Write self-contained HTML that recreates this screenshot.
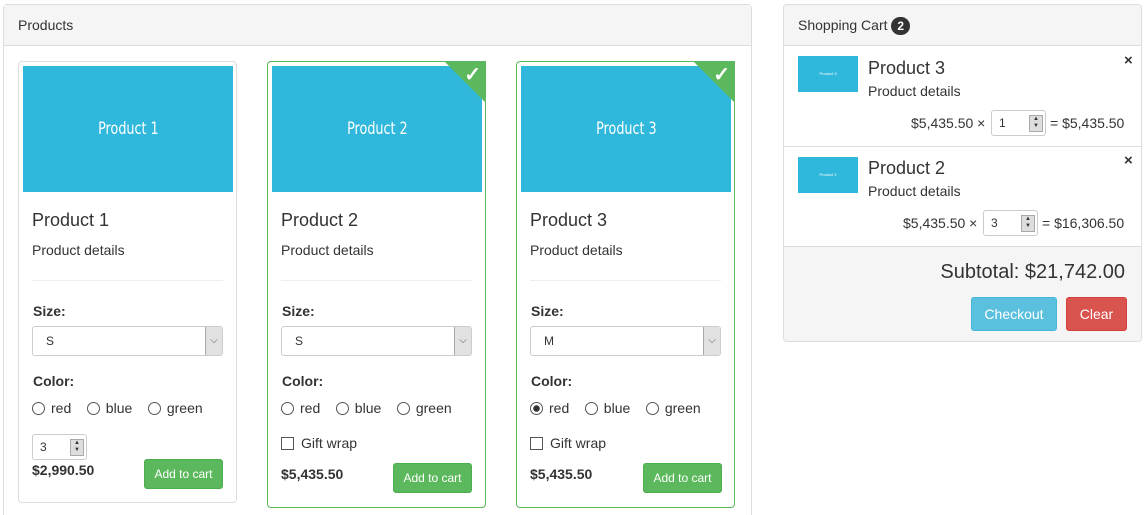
<!DOCTYPE html>
<html><head><style>
*{box-sizing:border-box}
html,body{margin:0;width:1145px;height:515px;overflow:hidden}
body{background:#fff;font-family:"Liberation Sans",Arial,sans-serif;color:#333;font-size:14px;position:relative}
.a{position:absolute}
.panel{border:1px solid #ddd;border-radius:4px;background:#fff}
.ph{background:#f5f5f5;border-bottom:1px solid #ddd;height:41px;padding:12px 14px;font-size:14px}
.card{border:1px solid #ddd;border-radius:4px;width:219px}
.card.sel{border-color:#5cb85c}
.img{left:4px;top:4px;width:210px;height:126px;background:#2fb8db;color:#fff;font-size:17px;display:flex;align-items:center;justify-content:center}
.img span{display:inline-block;transform:scaleX(0.75);font-family:"DejaVu Sans",sans-serif}
.tri{right:-1px;top:-1px;width:0;height:0;border-top:42px solid #5cb85c;border-left:42px solid transparent}
.chk{right:4px;top:0px;color:#fff;font-size:20px;font-weight:bold}
.sel2{width:191px;height:30px;border:1px solid #ccc;border-radius:3px;font-size:12px;padding:7px 13px}
.sel2 .dd{position:absolute;right:0;top:0;width:17px;height:28px;background:#e1e1e1;border-left:1px solid #aaa;font-size:10px;text-align:center;line-height:28px;color:#555}
.rad{width:13px;height:13px;border:1px solid #555;border-radius:50%;display:inline-block;vertical-align:-2px;margin-right:6px}
.btn{background:#5cb85c;color:#fff;border:1px solid #4cae4c;border-radius:3px;font-size:12px;text-align:center;width:79px;height:30px;line-height:28px}
.num{border:1px solid #ccc;border-radius:3px;height:26px;font-size:12px;padding:5px 7px}
.sp{position:absolute;right:2px;top:4px;width:14px;height:17px;background:#ddd;border:1px solid #aaa;font-size:6px;line-height:7px;text-align:center}
</style></head><body>
<div class="a panel" style="left:3px;top:4px;width:749px;height:540px">
<div class="ph">Products</div></div>

<!-- card1 -->
<div class="a card" style="left:18px;top:61px;height:442px">
<div class="a img"><span>Product 1</span></div>
<div class="a" style="left:13px;top:148px;font-size:18px">Product 1</div>
<div class="a" style="left:13px;top:180px">Product details</div>
<div class="a" style="left:13px;top:218px;width:191px;border-top:1px solid #eee"></div>
<div class="a" style="left:14px;top:241px;font-weight:bold">Size:</div>
<div class="a sel2" style="left:13px;top:264px">S<div class="dd">⌵</div></div>
<div class="a" style="left:14px;top:311px;font-weight:bold">Color:</div>
<div class="a" style="left:13px;top:338px"><span class="rad"></span>red&nbsp;&nbsp;&nbsp; <span class="rad"></span>blue&nbsp;&nbsp;&nbsp; <span class="rad"></span>green</div>
<div class="a num" style="left:13px;top:372px;width:55px">3<div class="sp">▲<br>▼</div></div>
<div class="a" style="left:13px;top:400px;font-weight:bold">$2,990.50</div>
<div class="a btn" style="left:125px;top:397px">Add to cart</div>
</div>

<!-- card2 -->
<div class="a card sel" style="left:267px;top:61px;height:447px">
<div class="a img"><span>Product 2</span></div>
<div class="a tri"></div><div class="a chk">✓</div>
<div class="a" style="left:13px;top:148px;font-size:18px">Product 2</div>
<div class="a" style="left:13px;top:180px">Product details</div>
<div class="a" style="left:13px;top:218px;width:191px;border-top:1px solid #eee"></div>
<div class="a" style="left:14px;top:241px;font-weight:bold">Size:</div>
<div class="a sel2" style="left:13px;top:264px">S<div class="dd">⌵</div></div>
<div class="a" style="left:14px;top:311px;font-weight:bold">Color:</div>
<div class="a" style="left:13px;top:338px"><span class="rad"></span>red&nbsp;&nbsp;&nbsp; <span class="rad"></span>blue&nbsp;&nbsp;&nbsp; <span class="rad"></span>green</div>
<div class="a" style="left:13px;top:373px"><span class="rad" style="border-radius:0;margin-right:7px"></span>Gift wrap</div>
<div class="a" style="left:13px;top:404px;font-weight:bold">$5,435.50</div>
<div class="a btn" style="left:125px;top:401px">Add to cart</div>
</div>

<!-- card3 -->
<div class="a card sel" style="left:516px;top:61px;height:447px">
<div class="a img"><span>Product 3</span></div>
<div class="a tri"></div><div class="a chk">✓</div>
<div class="a" style="left:13px;top:148px;font-size:18px">Product 3</div>
<div class="a" style="left:13px;top:180px">Product details</div>
<div class="a" style="left:13px;top:218px;width:191px;border-top:1px solid #eee"></div>
<div class="a" style="left:14px;top:241px;font-weight:bold">Size:</div>
<div class="a sel2" style="left:13px;top:264px">M<div class="dd">⌵</div></div>
<div class="a" style="left:14px;top:311px;font-weight:bold">Color:</div>
<div class="a" style="left:13px;top:338px"><span class="rad" style="background:radial-gradient(circle,#333 3px,#fff 3.5px)"></span>red&nbsp;&nbsp;&nbsp; <span class="rad"></span>blue&nbsp;&nbsp;&nbsp; <span class="rad"></span>green</div>
<div class="a" style="left:13px;top:373px"><span class="rad" style="border-radius:0;margin-right:7px"></span>Gift wrap</div>
<div class="a" style="left:13px;top:404px;font-weight:bold">$5,435.50</div>
<div class="a btn" style="left:126px;top:401px">Add to cart</div>
</div>

<!-- cart -->
<div class="a panel" style="left:783px;top:4px;width:359px;height:338px;overflow:hidden">
<div class="ph">Shopping Cart <span style="display:inline-block;background:#333;color:#fff;border-radius:10px;font-size:12px;font-weight:bold;padding:2px 6px;line-height:14px">2</span></div>
<div class="a" style="left:14px;top:51px;width:60px;height:36px;background:#2fb8db;color:#fff;font-size:4px;text-align:center;line-height:36px">Product 3</div>
<div class="a" style="left:84px;top:53px;font-size:18px">Product 3</div>
<div class="a" style="left:84px;top:78px">Product details</div>
<div class="a" style="left:340px;top:47px;font-weight:bold;font-size:15px">×</div>
<div class="a" style="left:127px;top:110px">$5,435.50 ×</div>
<div class="a num" style="left:207px;top:105px;width:55px;background:#fff">1<div class="sp">▲<br>▼</div></div>
<div class="a" style="left:266px;top:110px">= $5,435.50</div>
<div class="a" style="left:0;top:141px;width:359px;border-top:1px solid #ddd"></div>
<div class="a" style="left:14px;top:152px;width:60px;height:36px;background:#2fb8db;color:#fff;font-size:4px;text-align:center;line-height:36px">Product 2</div>
<div class="a" style="left:84px;top:153px;font-size:18px">Product 2</div>
<div class="a" style="left:84px;top:178px">Product details</div>
<div class="a" style="left:340px;top:147px;font-weight:bold;font-size:15px">×</div>
<div class="a" style="left:119px;top:210px">$5,435.50 ×</div>
<div class="a num" style="left:199px;top:205px;width:55px;background:#fff">3<div class="sp">▲<br>▼</div></div>
<div class="a" style="left:258px;top:210px">= $16,306.50</div>
<div class="a" style="left:0;top:241px;width:359px;height:100px;border-top:1px solid #ddd;background:#f5f5f5"></div>
<div class="a" style="right:16px;top:256px;font-size:20px">Subtotal: $21,742.00</div>
<div class="a" style="left:187px;top:292px;width:86px;height:34px;background:#5bc0de;border:1px solid #46b8da;border-radius:3px;color:#fff;text-align:center;line-height:32px">Checkout</div>
<div class="a" style="left:282px;top:292px;width:61px;height:34px;background:#d9534f;border:1px solid #d43f3a;border-radius:3px;color:#fff;text-align:center;line-height:32px">Clear</div>
</div>
</body></html>
